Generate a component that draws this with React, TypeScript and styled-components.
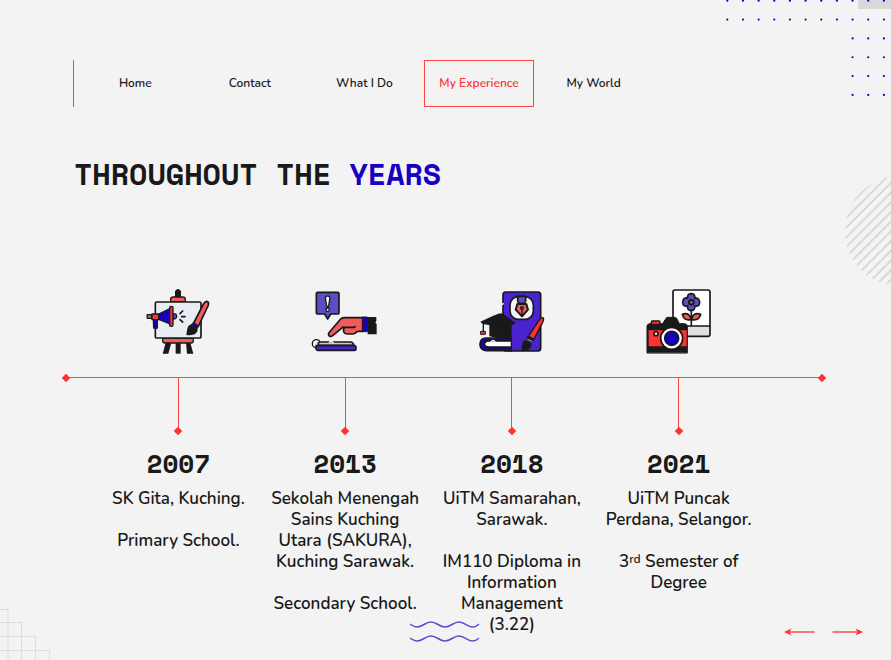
import React from "react";
import styled, { createGlobalStyle } from "styled-components";

const INK = "#191919";
const RED = "#ff3131";
const LINE = "#ff4242";
const BLUE = "#1800c2";
const VIOLET = "#5b4ec4";
const PURPLE = "#4a22d0";
const CORAL = "#f05b5b";

const GlobalStyle = createGlobalStyle`
  * { box-sizing: border-box; }
  body {
    margin: 0;
    background: #f3f3f3;
    color: ${INK};
    font-family: "Nunito", "Open Sans", sans-serif;
  }
`;

const Page = styled.div`
  position: relative;
  min-height: 100vh;
  padding: 60px 69px 0 66px;
  overflow: hidden;
`;

const Nav = styled.nav`
  display: flex;
  width: 578px;
  max-width: 100%;
  margin-left: 7px;
  padding-left: 4px;
  border-left: 1px solid ${LINE};
`;

const NavCell = styled.div`
  flex: 1;
  display: flex;
  justify-content: center;
`;

const NavLink = styled.a<{ $active?: boolean }>`
  width: 110px;
  padding: 14px 0;
  border: 1px solid ${(p) => (p.$active ? LINE : "transparent")};
  color: ${(p) => (p.$active ? RED : INK)};
  font-size: 12px;
  font-weight: 600;
  line-height: 17px;
  text-align: center;
  text-decoration: none;
`;

const Title = styled.h1`
  margin: 47px 0 88px 8px;
  font-family: "Space Mono", "DejaVu Sans Mono", monospace;
  font-size: 30px;
  font-weight: 700;
  line-height: 40px;
`;

const Accent = styled.span`
  color: ${BLUE};
`;

const Columns = styled.div`
  display: grid;
  grid-template-columns: repeat(4, minmax(0, 1fr));
  padding: 0 60px 0 29px;
`;

const IconCell = styled.div`
  display: flex;
  justify-content: center;
  padding-bottom: 15px;
`;

const Diamond = styled.span`
  flex: none;
  width: 6px;
  height: 6px;
  background: ${RED};
  transform: rotate(45deg);
`;

const Rule = styled.div`
  display: flex;
  align-items: center;
  height: 1px;
  margin: 0 -3px;
`;

const RuleLine = styled.span`
  flex: 1;
  height: 1px;
  background: ${LINE};
`;

const Entry = styled.article`
  display: flex;
  flex-direction: column;
  align-items: center;
  text-align: center;
`;

const Stem = styled.span`
  width: 1px;
  height: 50px;
  background: ${LINE};
`;

const Year = styled.h2`
  margin: 13px 0 9px;
  font-family: "Space Mono", "DejaVu Sans Mono", monospace;
  font-size: 26px;
  font-weight: 700;
  line-height: 32px;
`;

const Text = styled.p`
  margin: 0 0 21px;
  font-size: 17px;
  font-weight: 600;
  line-height: 21px;
  white-space: nowrap;

  &:last-child {
    margin-bottom: 0;
  }
`;

const Sup = styled.sup`
  font-size: 12px;
  line-height: 0;
  vertical-align: 4px;
`;

const Corner = styled.svg<{ $at: "topRight" | "right" | "bottomLeft" | "bottom" }>`
  position: absolute;
  pointer-events: none;
  ${(p) =>
    ({
      topRight: "top: 0; right: 0;",
      right: "top: 170px; right: 0;",
      bottomLeft: "bottom: 0; left: 0;",
      bottom: "bottom: 16px; left: 46%;",
    })[p.$at]}
`;

const Pager = styled.div`
  position: absolute;
  right: 28px;
  bottom: 22px;
  display: flex;
  gap: 17px;
`;

const PagerButton = styled.button`
  display: flex;
  padding: 0;
  border: 0;
  background: none;
  cursor: pointer;
`;

function EaselIcon() {
  return (
    <svg width="80" height="80" viewBox="-4 -2 240 240" strokeLinejoin="round" strokeLinecap="round" aria-hidden="true">
      <path d="M109 180v33h15v-33z" fill={INK} />
      <path d="M140 180h13l9 33h-19zM79 180h17l-9 33H70z" fill={INK} />
      <path d="M109 42V26q7-10 14 0v16z" fill={INK} stroke={INK} strokeWidth="4" />
      <path d="M94 58V50q0-7 8-7h28q8 0 8 7v8z" fill={CORAL} stroke={INK} strokeWidth="4" />
      <path d="M70 166h92v8q0 7-8 7H78q-8 0-8-7z" fill={CORAL} stroke={INK} strokeWidth="4" />
      <rect x="48" y="58" width="137" height="108" rx="4" fill="#e7edf3" stroke={INK} strokeWidth="5" />
      <path d="M42 110h12v26q-6 4-11 0z" fill={BLUE} stroke={INK} strokeWidth="4" />
      <path d="M38 96H24q-3 6 0 11h14z" fill="#777" stroke={INK} strokeWidth="4" />
      <path d="M58 94 92 78v46L58 110z" fill={BLUE} stroke={INK} strokeWidth="4" />
      <path d="M38 94h20v17H38z" fill={RED} stroke={INK} strokeWidth="4" />
      <path d="M101 93q11 0 11 8t-11 9z" fill={VIOLET} stroke={INK} strokeWidth="4" />
      <rect x="91" y="71" width="10" height="60" rx="4" fill={RED} stroke={INK} strokeWidth="4" />
      <path d="m122 93 8-8M127 102h10M122 111l8 7" stroke={INK} strokeWidth="5" />
      <path d="M163 121 193 63q6-9 12-6 5 3 1 13l-29 61z" fill={CORAL} stroke={INK} strokeWidth="5" />
      <path d="m162 120 16 10-5 8-16-10z" fill={BLUE} stroke={INK} strokeWidth="3" />
      <path d="M156 125q19 4 19 18-4 18-34 14 1-4 2-14 2-16 13-18z" fill={INK} />
    </svg>
  );
}

function TapIcon() {
  return (
    <svg width="80" height="80" viewBox="4 0 240 240" strokeLinejoin="round" strokeLinecap="round" aria-hidden="true">
      <path d="M42 31h60q4 0 4 4v57q0 4-4 4H81l-9 15-9-15H42q-4 0-4-4V35q0-4 4-4z" fill={VIOLET} stroke={INK} strokeWidth="5" />
      <path d="M65 46q7-8 14 0l-4 26q-3 3-6 0z" fill="#fff" stroke={INK} strokeWidth="4" />
      <circle cx="72" cy="83" r="5" fill="#fff" stroke={INK} strokeWidth="4" />
      <circle cx="38" cy="185" r="12" fill="#f3f3f3" stroke={INK} strokeWidth="4" />
      <path d="M44 190v-8l5-2h92q7 0 10 10z" fill="#c9cbd0" stroke={INK} strokeWidth="5" />
      <path d="m77 181 6-4 6 5" fill="#f3f3f3" stroke="#f3f3f3" strokeWidth="4" />
      <path d="M37 191h114q6 0 6 6v3q0 5-5 5H43q-6 0-6-6z" fill={PURPLE} stroke={INK} strokeWidth="5" />
      <path d="M178 107h-57q-6 0-12 6l-32 38q-5 7 0 11 5 3 11-2l29-24h5q-5 9-1 15 3 5 11 5h16q6 0 13-8h17z" fill={CORAL} stroke={INK} strokeWidth="5" />
      <path d="M118 136h28q8 0 8-2" fill="none" stroke={INK} strokeWidth="5" />
      <path d="M177 105h14v44h-14z" fill={BLUE} stroke={INK} strokeWidth="3" />
      <path d="M190 105h28v12l-3 5 4 4v31h-27z" fill={INK} />
    </svg>
  );
}

function DesignIcon() {
  return (
    <svg width="80" height="80" viewBox="0 0 240 240" strokeLinejoin="round" strokeLinecap="round" aria-hidden="true">
      <rect x="93" y="30" width="113" height="177" rx="8" fill={PURPLE} stroke={INK} strokeWidth="5" />
      <path d="M88 68 93 65" stroke="#f3f3f3" strokeWidth="5" />
      <rect x="114" y="44" width="70" height="68" rx="25" fill="#f5f5f5" stroke={INK} strokeWidth="5" />
      <path d="M137 43h24v15l-5 6h-15l-4-6z" fill={VIOLET} stroke={INK} strokeWidth="5" />
      <path d="M136 66h27l5 17-18 20-19-20z" fill={CORAL} stroke={INK} strokeWidth="6" />
      <path d="M150 101V82" stroke={INK} strokeWidth="4" />
      <circle cx="150" cy="78" r="4" fill={RED} stroke={INK} strokeWidth="4" />
      <path d="M52 122v41q27 9 67 3v-44z" fill={INK} />
      <path d="M25 119 62 102l17-7q7-2 14 0l38 28q-4 5-16 7-35-6-60 0L32 126z" fill={INK} />
      <path d="M34 121v28" stroke={INK} strokeWidth="4" />
      <path d="M27 148h13v9H27z" fill={RED} stroke={INK} strokeWidth="3" />
      <path d="M118 168H42q-18 1-18 19 0 17 18 19h76v-9H48q-11-2-11-11t11-10h70z" fill={BLUE} stroke={INK} strokeWidth="5" />
      <path d="M118 177H49q-11 1-11 9t11 9h69z" fill="#fff" stroke={INK} strokeWidth="4" />
      <path d="m58 178 6-3 5 4" fill="none" stroke="#fff" strokeWidth="4" />
      <path d="m170 162 31-47q6-10 12-8 4 3-1 14l-27 51z" fill={RED} stroke={INK} strokeWidth="4" />
      <path d="m167 161 20 12-6 9-20-12z" fill={INK} />
      <path d="m167 172 13 6" stroke="#aaa" strokeWidth="3" />
      <path d="M157 175q20 2 22 15-3 17-31 18 1-5 2-17 1-10 7-16z" fill={INK} />
    </svg>
  );
}

function CameraIcon() {
  return (
    <svg width="80" height="80" viewBox="2 0 240 240" strokeLinejoin="round" strokeLinecap="round" aria-hidden="true">
      <rect x="104" y="24" width="111" height="139" rx="6" fill="#fff" />
      <path d="M104 132h111v25q0 6-6 6H104z" fill="#dfdfdf" />
      <rect x="104" y="24" width="111" height="139" rx="6" fill="none" stroke={INK} strokeWidth="5" />
      <path d="M106 132h108" stroke={INK} strokeWidth="5" />
      <path
        d="M148 48q-3-12 11-13 13 1 10 14 14-3 15 12-1 14-15 11 2 13-10 14-14-1-11-14-14 3-15-11 1-15 15-13z"
        fill={VIOLET}
        stroke={INK}
        strokeWidth="5"
      />
      <circle cx="159" cy="61" r="7" fill="#7e7e86" stroke={INK} strokeWidth="6" />
      <path d="M159 85v46" stroke={INK} strokeWidth="5" />
      <path d="M158 113q-21 4-26-16 22-8 26 16zM160 113q22 4 27-16-23-8-27 16z" fill={CORAL} stroke={INK} strokeWidth="5" />
      <path d="M26 212V133q0-7 8-8h39l10-16q2-3 6-3h20q4 0 6 3l8 16h16q8 1 8 8v79z" fill={INK} stroke={INK} strokeWidth="3" />
      <rect x="39" y="117" width="26" height="10" rx="3" fill={RED} stroke={INK} strokeWidth="4" />
      <path d="M31 145h114v48H31z" fill={RED} />
      <circle cx="53" cy="155" r="6" fill="#fff" stroke={INK} strokeWidth="5" />
      <circle cx="100" cy="169" r="33" fill="#fff" stroke={INK} strokeWidth="5" />
      <circle cx="100" cy="169" r="21" fill={BLUE} stroke={INK} strokeWidth="5" />
    </svg>
  );
}

function DotPattern() {
  const dots: React.ReactNode[] = [];
  for (let row = 0; row < 6; row++) {
    for (let col = row < 2 ? 0 : 8; col < 11; col++) {
      dots.push(<circle key={`${row}-${col}`} cx={7.3 + col * 15.66} cy={0.7 + row * 18.85} r="1.1" />);
    }
  }
  return (
    <Corner $at="topRight" width="171" height="100" aria-hidden="true">
      <rect x="138" width="33" height="9" fill="#d9d9d9" />
      <g fill={BLUE}>{dots}</g>
    </Corner>
  );
}

function StripedCircle() {
  return (
    <Corner $at="right" width="51" height="120" aria-hidden="true">
      <clipPath id="disc">
        <circle cx="60" cy="61" r="55" />
      </clipPath>
      <g clipPath="url(#disc)" stroke="#d6d6d6" strokeWidth="1.8">
        {Array.from({ length: 13 }, (_, i) => {
          const sum = 44.4 + i * 9.7;
          return <line key={i} x1="-10" y1={sum + 10} x2="70" y2={sum - 70} />;
        })}
      </g>
    </Corner>
  );
}

const navItems = ["Home", "Contact", "What I Do", "My Experience", "My World"];

const entries = [
  { year: "2007", icon: <EaselIcon />, text: [["SK Gita, Kuching."], ["Primary School."]] },
  {
    year: "2013",
    icon: <TapIcon />,
    text: [["Sekolah Menengah", "Sains Kuching", "Utara (SAKURA),", "Kuching Sarawak."], ["Secondary School."]],
  },
  {
    year: "2018",
    icon: <DesignIcon />,
    text: [
      ["UiTM Samarahan,", "Sarawak."],
      ["IM110 Diploma in", "Information", "Management", "(3.22)"],
    ],
  },
  {
    year: "2021",
    icon: <CameraIcon />,
    text: [
      ["UiTM Puncak", "Perdana, Selangor."],
      [
        <React.Fragment key="s">
          3<Sup>rd</Sup> Semester of
        </React.Fragment>,
        "Degree",
      ],
    ],
  },
];

export default function App() {
  return (
    <>
      <GlobalStyle />
      <Page>
        <DotPattern />
        <StripedCircle />
        <Corner $at="bottomLeft" width="51" height="52" aria-hidden="true">
          <path d="M0 1.5h8V52M0 14.5h21.5V52M0 28.5h35.5V52M0 42.5h49.5V52" fill="none" stroke="#dcdcdc" />
        </Corner>
        <Corner $at="bottom" width="70" height="24" aria-hidden="true">
          <g fill="none" stroke={VIOLET} strokeWidth="1.5">
            {[5, 19].map((y) => (
              <path
                key={y}
                d={`M0 ${y - 1}c3 2 4 3 7 3 6 0 8-5 14-5s8 5 14 5 8-5 14-5 8 5 13 5 4-1 7-3`}
              />
            ))}
          </g>
        </Corner>

        <Nav>
          {navItems.map((item) => (
            <NavCell key={item}>
              <NavLink href="#" $active={item === "My Experience"}>
                {item}
              </NavLink>
            </NavCell>
          ))}
        </Nav>

        <main>
          <Title>
            THROUGHOUT THE <Accent>YEARS</Accent>
          </Title>
          <Columns>
            {entries.map((e) => (
              <IconCell key={e.year}>{e.icon}</IconCell>
            ))}
          </Columns>
          <Rule>
            <Diamond />
            <RuleLine />
            <Diamond />
          </Rule>
          <Columns>
            {entries.map((e) => (
              <Entry key={e.year}>
                <Stem />
                <Diamond />
                <Year>{e.year}</Year>
                {e.text.map((lines, i) => (
                  <Text key={i}>
                    {lines.map((line, j) => (
                      <React.Fragment key={j}>
                        {j > 0 && <br />}
                        {line}
                      </React.Fragment>
                    ))}
                  </Text>
                ))}
              </Entry>
            ))}
          </Columns>
        </main>

        <Pager>
          <PagerButton aria-label="Previous">
            <svg width="31" height="12" viewBox="0 0 31 12" aria-hidden="true">
              <path d="M2 6h28.500" stroke={RED} strokeWidth="1.300" />
              <path d="M0 6 7.500 2.500 5.500 6l2 3.500z" fill={RED} />
            </svg>
          </PagerButton>
          <PagerButton aria-label="Next">
            <svg width="31" height="12" viewBox="0 0 31 12" aria-hidden="true">
              <path d="M.5 6H29" stroke={RED} strokeWidth="1.300" />
              <path d="m31 6-7.500-3.500 2 3.500-2 3.500z" fill={RED} />
            </svg>
          </PagerButton>
        </Pager>
      </Page>
    </>
  );
}
